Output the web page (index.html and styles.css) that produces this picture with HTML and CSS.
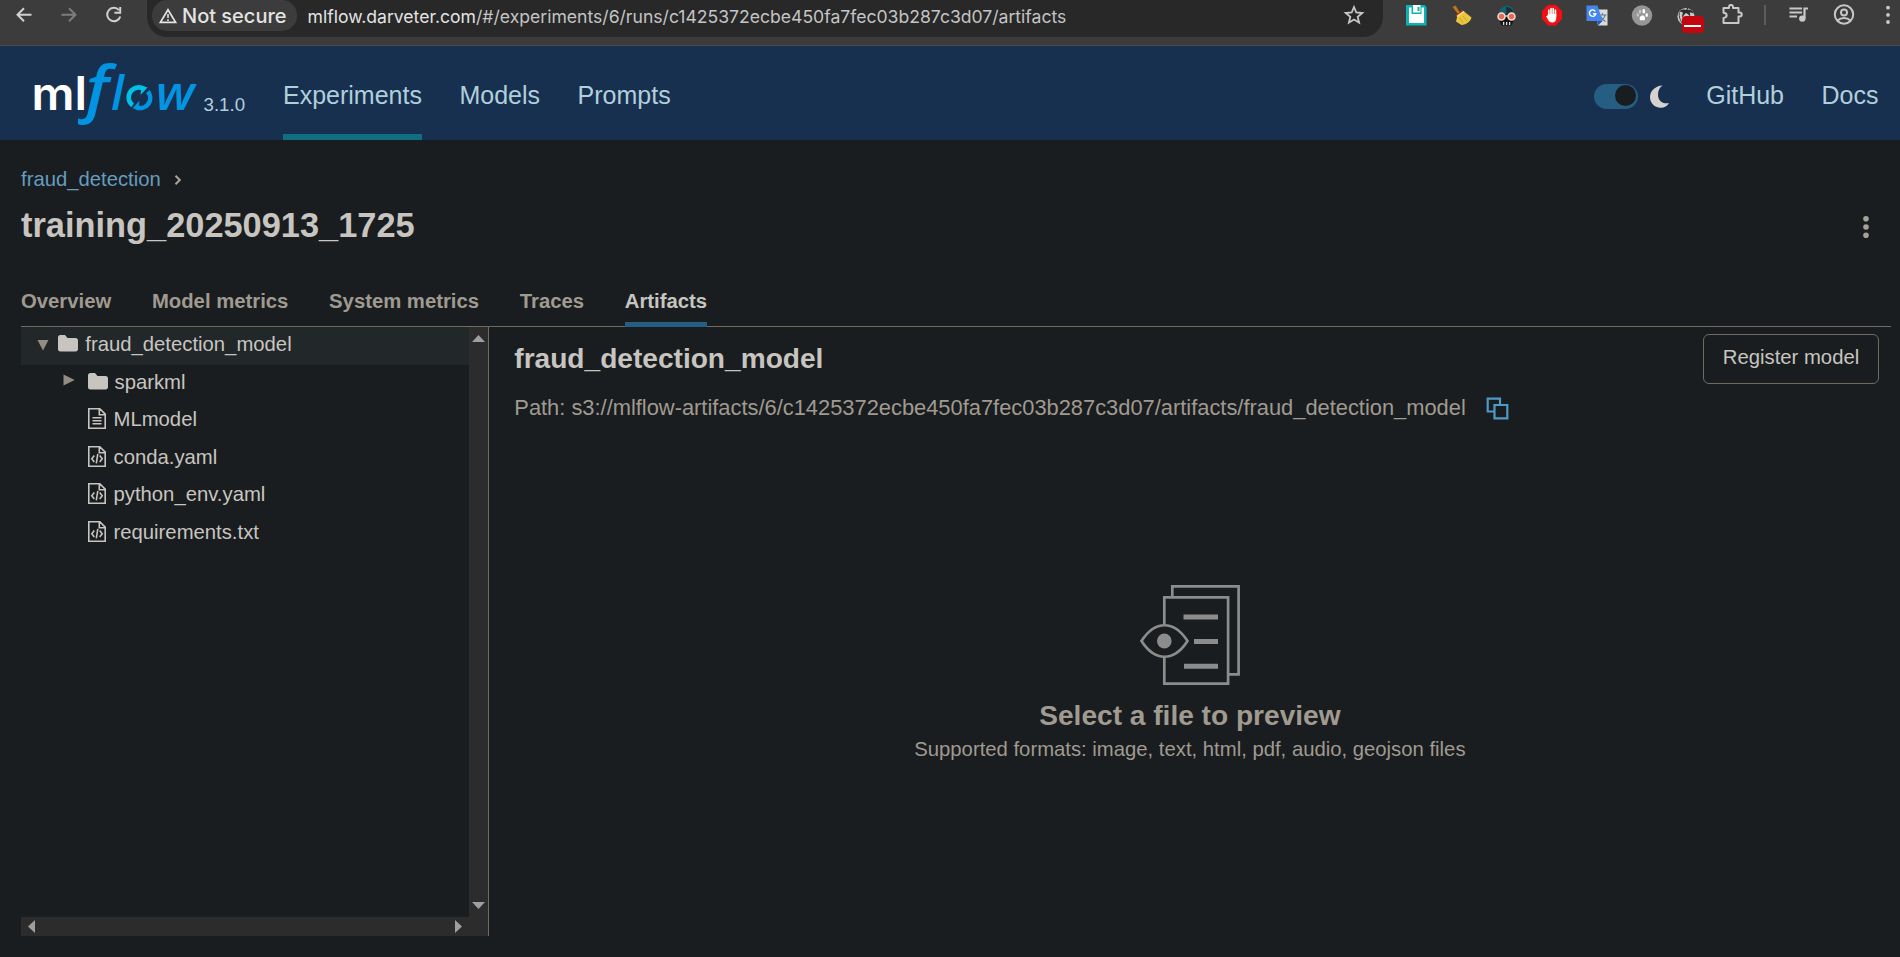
FILE: index.html
```html
<!DOCTYPE html>
<html lang="en">
<head>
<meta charset="utf-8">
<title>training_20250913_1725 - MLflow</title>
<link rel="stylesheet" href="styles.css">
</head>
<body>
<div class="browser-bar">
  <div class="nav-buttons">
    <svg class="ico" viewBox="0 0 22 22"><path d="M18.500 10.700H5M11 4.200L4.500 10.700l6.500 6.500" fill="none" stroke="#d0d0d0" stroke-width="2"/></svg>
    <svg class="ico" viewBox="0 0 22 22"><path d="M3.500 10.700H17M11 4.200l6.500 6.500-6.500 6.500" fill="none" stroke="#7d7d7d" stroke-width="2"/></svg>
    <svg class="ico" viewBox="0 0 22 22"><path d="M16 6.200A6.700 6.700 0 1 0 17.300 12.500" fill="none" stroke="#d0d0d0" stroke-width="2"/><path d="M18.200 3v6.800h-6.800v-2h4.800V3z" fill="#d0d0d0"/></svg>
  </div>
  <div class="address">
    <div class="chip">
      <svg class="warn" viewBox="0 0 18 16"><path d="M9 1.700L16.600 14.400H1.400z" fill="none" stroke="#e3e3e3" stroke-width="1.700"/><path d="M9 6v4M9 11.200v1.700" stroke="#e3e3e3" stroke-width="1.600"/></svg>
      <span class="chip-text">Not secure</span>
    </div>
    <div class="url"><span class="host">mlflow.darveter.com</span>/#/experiments/6/runs/c1425372ecbe450fa7fec03b287c3d07/artifacts</div>
    <svg class="ico star" viewBox="0 0 22 22"><path d="M11 3l2.300 5.500 6 .5-4.600 3.900 1.400 5.800L11 15.600l-5.100 3.100 1.400-5.800L2.700 9l6-.5z" fill="none" stroke="#c8c8c8" stroke-width="1.800"/></svg>
  </div>
  <div class="extensions">
    <svg class="ico" viewBox="0 0 22 22"><path d="M0 1h18.500l2 2v18.500H0z" fill="#0cb3b5"/><path d="M3 3.500h15v15.500H3z" fill="#fff"/><path d="M5.500 1h10v9h-10z" fill="#0cb3b5"/><path d="M7 1h7.500v7.500H7z" fill="#fff"/><path d="M11.500 3h2v4h-2z" fill="#0cb3b5"/></svg>
    <svg class="ico" viewBox="0 0 22 22"><path d="M1.500 3l3-1.500 4.500 7-2 1.500z" fill="#b97a16"/><path d="M5 11l6.500-5L14 9l-6 6z" fill="#c9301c"/><path d="M6.500 11.500L12.500 7l8 6.500c-1 4-5 7-10 7.500L5 17.500z" fill="#eac63f"/><path d="M9 14l3 5M12 12l4 5" stroke="#c39c23" stroke-width=".8"/><path d="M6 12.500l7-5" stroke="#f6e38a" stroke-width="1.500"/></svg>
    <svg class="ico" viewBox="0 0 22 22"><path d="M2.500 12C2.500 5 7 1.500 11 1.500S18.500 5 18.500 12z" fill="#17606c"/><path d="M10 3c5 0 7 3 7.500 7h-7z" fill="#1b3036"/><path d="M3 10.500h15v5l-2.500 6H5.500l-2.500-6z" fill="#151515"/><path d="M7 18h1.300v3H7zM10 18h1.300v3H10zM13 18h1.300v3H13z" fill="#ddd"/><circle cx="5.500" cy="12.500" r="3.500" fill="#e46a58" stroke="#f7dcd5" stroke-width="1.500"/><circle cx="15.500" cy="12.500" r="3.500" fill="#e46a58" stroke="#f7dcd5" stroke-width="1.500"/><path d="M9 12h3" stroke="#f7dcd5" stroke-width="1.300"/></svg>
    <svg class="ico" viewBox="0 0 22 22"><path d="M7 1h8l6 6v8l-6 6.500H7L1 15V7z" fill="#f40d12"/><path d="M7.800 12V6.200M10 11V4.700M12.200 11V4.700M14.400 12V6.200" stroke="#fff" stroke-width="1.700" stroke-linecap="round"/><path d="M6.900 10h8.400v4c0 3-1.800 4.500-4 4.500-2.600 0-3.700-1.500-5-4l-1.200-2.300 1.600-.6z" fill="#fff"/></svg>
    <svg class="ico" viewBox="0 0 22 22"><path d="M8 5.500h13.500v16H12z" fill="#dadada"/><path d="M13 11h7.500M16.500 9v2M19 11c-.5 3-2.500 5-5 6.500M14.500 12c1 2.500 3 4.500 5 5.500" fill="none" stroke="#607d8b" stroke-width="1.200"/><path d="M.5 1.500h11l5 15.500H.5z" fill="#4486ee"/><path d="M11 17h5.500L12 21.500z" fill="#2855b3"/><path d="M9.300 7.300A3.200 3.200 0 1 0 9.800 9.800H7" fill="none" stroke="#fff" stroke-width="1.400"/></svg>
    <svg class="ico" viewBox="0 0 22 22"><circle cx="11" cy="11.500" r="10.200" fill="#969696"/><ellipse cx="6.800" cy="11" rx="1.200" ry="1.800" fill="#c7c7c7"/><ellipse cx="9" cy="7.700" rx="1.300" ry="2" fill="#c7c7c7"/><ellipse cx="12.800" cy="7.300" rx="1.400" ry="2.200" fill="#fff"/><ellipse cx="15.700" cy="11" rx="1.200" ry="1.900" fill="#fff"/><path d="M11.500 11.500c2.200 0 3 2.500 2.400 4-.6 1.300-1.300.7-2.400.7s-2.200.7-2.700-.7c-.5-1.500.5-4 2.700-4z" fill="#fff"/></svg>
    <div class="ext-badged">
      <svg class="ico" viewBox="0 0 22 22"><circle cx="10" cy="12.500" r="8.600" fill="#cbcbcb"/><path d="M10 6c-3-1-6 0-7 2 2-.5 3 0 4 1-1 1.500-1 3-.5 5 1-2.500 2-4 3.500-5 2 1 3.500 2 4 4 .5-2 0-3.500-.5-4.500 2 0 3.500.5 4.500 1.500C17 6 14 5 11.500 6L13 1z" fill="#2c2c2c"/><path d="M3.500 8.500C2.500 12 4 16 6 19" fill="none" stroke="#444" stroke-width="1"/></svg>
      <span class="ext-badge"></span>
    </div>
    <svg class="ico" viewBox="0 0 22 22"><path d="M2.500 4H8V2.900a2 2 0 0 1 4 0V4h5.500v4.500h1.200a2 2 0 0 1 0 4H17.500v6.500h-15v-5c4.200-.3 4.200-5 0-5.200z" fill="none" stroke="#c8c8c8" stroke-width="2" stroke-linejoin="round"/></svg>
  </div>
  <div class="bar-sep"></div>
  <div class="profile-icons">
    <svg class="ico" viewBox="0 0 22 22"><path d="M1.500 4.500H14M1.500 8.500H14M1.500 12.500H9" stroke="#c8c8c8" stroke-width="1.900"/><path d="M16.500 14.500V4.500H20" fill="none" stroke="#c8c8c8" stroke-width="2.200"/><circle cx="14.300" cy="14.600" r="3.200" fill="#c8c8c8"/></svg>
    <svg class="ico" viewBox="0 0 22 22"><circle cx="11" cy="10.500" r="9.200" fill="none" stroke="#c8c8c8" stroke-width="2"/><circle cx="11" cy="8.500" r="3" fill="none" stroke="#c8c8c8" stroke-width="2"/><path d="M4.500 16.500c3.500-3.300 9.500-3.300 13 0" fill="none" stroke="#c8c8c8" stroke-width="2"/></svg>
    <svg class="ico" viewBox="0 0 22 22"><g fill="#c8c8c8"><circle cx="11" cy="3.700" r="1.900"/><circle cx="11" cy="10.900" r="1.900"/><circle cx="11" cy="18" r="1.900"/></g></svg>
  </div>
</div>

<header class="header">
  <svg class="logo" viewBox="0 -11 170 94" role="img">
    <text class="logo-ml" x="0.500" y="53" textLength="55.500" lengthAdjust="spacingAndGlyphs">ml</text>
    <text class="logo-f" transform="translate(54.500 53) scale(1.120 1)" x="0" y="0">f</text>
    <text class="logo-l" x="80" y="53">l</text>
    <path d="M101.600 48.300A10 10 0 0 1 112.500 31.600" fill="none" stroke="#00c2e8" stroke-width="4.600"/>
    <path d="M110.500 28.500L116.500 30.500l-7 7.500z" fill="#00c2e8"/>
    <path d="M116.800 34.500A10 10 0 0 1 105.500 50.300" fill="none" stroke="#0094e2" stroke-width="4.600"/>
    <path d="M107.500 53.300L101.500 51.300l7-7.500z" fill="#0094e2"/>
    <text class="logo-w" x="124.500" y="53" textLength="39" lengthAdjust="spacingAndGlyphs">w</text>
  </svg>
  <span class="version">3.1.0</span>
  <nav class="main-nav">
    <a class="nav-link active">Experiments</a>
    <a class="nav-link">Models</a>
    <a class="nav-link">Prompts</a>
  </nav>
  <div class="header-right">
    <span class="toggle"><span class="knob"></span></span>
    <svg class="moon" viewBox="0 0 19 23"><path d="M12.500 .5C5.500 1 0 5.500 0 12c0 6 4.500 10.700 10.500 10.700 4 0 7-1.700 8.500-4.700-6 1.500-11-2-11-8.500 0-4 1.500-7 4.500-9z" fill="#d6d2cf"/></svg>
    <a class="nav-link">GitHub</a>
    <a class="nav-link">Docs</a>
  </div>
</header>

<main class="page">
  <div class="breadcrumb">
    <a class="crumb">fraud_detection</a>
    <svg class="chev" viewBox="0 0 8 12"><path d="M1.500 1.700L5.800 6 1.500 10.300" fill="none" stroke="#aaa49b" stroke-width="2"/></svg>
  </div>
  <div class="title-row">
    <h1 class="title">training_20250913_1725</h1>
    <svg class="kebab" viewBox="0 0 6 24"><g fill="#a8a198"><circle cx="3" cy="3.800" r="2.800"/><circle cx="3" cy="12" r="2.800"/><circle cx="3" cy="20.200" r="2.800"/></g></svg>
  </div>
  <div class="tabs">
    <span class="tab">Overview</span>
    <span class="tab">Model metrics</span>
    <span class="tab">System metrics</span>
    <span class="tab">Traces</span>
    <span class="tab selected">Artifacts</span>
  </div>
  <div class="split">
    <aside class="tree">
      <div class="tree-top">
        <div class="tree-list">
          <div class="node root"><svg class="caret" viewBox="0 0 12 12"><path d="M.5 1h11L6 11.500z"/></svg><svg class="folder" viewBox="0 0 20 17"><path d="M2.500 0h4.500l2.500 3h8A2.500 2.500 0 0 1 20 5.500v9a2.500 2.500 0 0 1-2.500 2H2.500A2.500 2.500 0 0 1 0 14V2.500A2.500 2.500 0 0 1 2.500 0z"/></svg><span class="label">fraud_detection_model</span></div>
          <div class="node child"><svg class="caret" viewBox="0 0 12 12"><path d="M.500 .500v11L11.700 6z"/></svg><svg class="folder" viewBox="0 0 20 17"><path d="M2.500 0h4.500l2.500 3h8A2.500 2.500 0 0 1 20 5.500v9a2.500 2.500 0 0 1-2.500 2H2.500A2.500 2.500 0 0 1 0 14V2.500A2.500 2.500 0 0 1 2.500 0z"/></svg><span class="label">sparkml</span></div>
          <div class="node leaf"><svg class="file" viewBox="0 0 18 21"><path d="M.8.800h11l5.400 5.400v14H.8zM11.300 1v5.700H17M4.500 9.700h9M4.500 12.700h9M4.500 15.700h9"/></svg><span class="label">MLmodel</span></div>
          <div class="node leaf"><svg class="file" viewBox="0 0 18 21"><path d="M.8.800h11l5.400 5.400v14H.8zM11.300 1v5.700H17M6.300 9.500L3.800 12.700l2.500 3.200M11.700 9.500l2.500 3.200-2.500 3.200M9.800 7.800L8.300 17.300"/></svg><span class="label">conda.yaml</span></div>
          <div class="node leaf"><svg class="file" viewBox="0 0 18 21"><path d="M.8.800h11l5.400 5.400v14H.8zM11.300 1v5.700H17M6.300 9.500L3.800 12.700l2.500 3.200M11.700 9.500l2.500 3.200-2.500 3.200M9.800 7.800L8.300 17.300"/></svg><span class="label">python_env.yaml</span></div>
          <div class="node leaf"><svg class="file" viewBox="0 0 18 21"><path d="M.8.800h11l5.400 5.400v14H.8zM11.300 1v5.700H17M6.300 9.500L3.800 12.700l2.500 3.200M11.700 9.500l2.500 3.200-2.500 3.200M9.800 7.800L8.300 17.300"/></svg><span class="label">requirements.txt</span></div>
        </div>
        <div class="vscroll">
          <svg class="arrow-v" viewBox="0 0 13 7"><path d="M6.500 0L13 7H0z"/></svg>
          <svg class="arrow-v" viewBox="0 0 13 7"><path d="M0 0h13L6.500 7z"/></svg>
        </div>
      </div>
      <div class="hscroll">
        <svg class="arrow-h" viewBox="0 0 7 13"><path d="M7 0v13L0 6.500z"/></svg>
        <svg class="arrow-h" viewBox="0 0 7 13"><path d="M0 0l7 6.500L0 13z"/></svg>
      </div>
    </aside>
    <section class="detail">
      <div class="detail-head">
        <div class="detail-info">
          <h2 class="detail-title">fraud_detection_model</h2>
          <div class="path-row">
            <span class="path">Path: s3://mlflow-artifacts/6/c1425372ecbe450fa7fec03b287c3d07/artifacts/fraud_detection_model</span>
            <svg class="copy" viewBox="0 0 23 23"><path d="M8 14.500H1.700V1.700h12.300V7M8.500 8h12.800v13.300H8.500z" fill="none" stroke="#4e9ac9" stroke-width="2.200"/></svg>
          </div>
        </div>
        <button class="register">Register model</button>
      </div>
      <div class="empty">
        <svg class="preview" viewBox="0 0 100 100"><g fill="none" stroke="#8c8c8c" stroke-width="2.700"><path d="M32.300 12V1.400h66.300v87.900H89M24.300 39V12.300h63.800v86.300H24.300V72"/><path d="M1.500 56C15 35 34 35 47.500 56 34 77 15 77 1.500 56z"/></g><path d="M43.500 29.500h34.500v5H43.500zM54 54h24v5H54zM44 78.700h34v5H44z" fill="#8c8c8c"/><ellipse cx="24.300" cy="56" rx="7.300" ry="7.600" fill="#8c8c8c"/></svg>
        <div class="empty-title">Select a file to preview</div>
        <div class="empty-sub">Supported formats: image, text, html, pdf, audio, geojson files</div>
      </div>
    </section>
  </div>
</main>
</body>
</html>
```
FILE: styles.css
```css
* { box-sizing: border-box; }
body {
  margin: 0;
  height: 957px;
  overflow: hidden;
  background: #191d1f;
  color: #c8c5c0;
  font-family: "Liberation Sans", Arial, sans-serif;
  font-size: 20.3px;
}
svg { display: block; flex: none; }

/* Browser toolbar */
.browser-bar {
  display: flex;
  align-items: flex-start;
  height: 46px;
  background: #3c3c3c;
  border-bottom: 1px solid #4a4a4a;
  font-family: Inter, sans-serif;
}
.ico { width: 22px; height: 22px; }
.nav-buttons { display: flex; gap: 23px; width: 146.500px; padding: 4px 0 0 12.500px; }
.address {
  display: flex;
  align-items: flex-start;
  width: 1236.500px;
  height: 37px;
  padding-left: 5.500px;
  background: #282828;
  border-radius: 0 0 20px 20px;
}
.chip {
  display: flex;
  align-items: center;
  gap: 5.500px;
  width: 145px;
  height: 31px;
  padding-left: 6.500px;
  background: #3c3c3c;
  border-radius: 15px;
}
.warn { width: 18px; height: 16px; }
.chip-text { color: #e3e3e3; font-size: 20px; font-weight: 500; line-height: 32px; white-space: nowrap; }
.url { margin-left: 10.500px; color: #c4c4c4; font-size: 17.580px; line-height: 34px; white-space: nowrap; }
.host { color: #e3e3e3; }
.star { margin: 4px 18.500px 0 auto; }
.extensions { display: flex; gap: 23px; padding: 4px 0 0 22.500px; }
.ext-badged { position: relative; }
.ext-badge {
  position: absolute;
  left: 6px;
  top: 12px;
  width: 22px;
  height: 17px;
  border-radius: 4px;
  background: linear-gradient(#fff, #fff) center 9px / 17px 2px no-repeat #c5050f;
}
.bar-sep { width: 2px; height: 20px; margin: 5px 22px 0 21.500px; background: #5d5d5d; }
.profile-icons { display: flex; gap: 22.500px; padding-top: 4px; }

/* Application header */
.header {
  display: flex;
  height: 94px;
  padding: 0 21.500px 0 31px;
  background: #18304f;
  color: #b0cfdc;
}
.logo { width: 170px; height: 94px; overflow: visible; }
.logo-ml { font: 600 46px Inter, sans-serif; fill: #fff; }
.logo-f { font: italic 600 61px "Open Sans", sans-serif; fill: #0094e2; }
.logo-l, .logo-w { font: italic 600 47px "Open Sans", sans-serif; fill: #0094e2; }
.version { width: 80px; padding-left: 2.500px; font-size: 18.700px; line-height: 118px; }
.main-nav { display: flex; gap: 37.500px; margin-left: 2px; }
.nav-link { font-size: 25px; line-height: 98.500px; height: 94px; white-space: nowrap; }
.nav-link.active { border-bottom: 6px solid #116e80; }
.header-right { display: flex; align-items: flex-start; margin-left: auto; }
.header-right .nav-link { margin-left: 37.500px; }
.toggle {
  display: flex;
  justify-content: flex-end;
  width: 44px;
  height: 25px;
  margin-top: 38px;
  padding: 1px 2px;
  border-radius: 13px;
  background: #265d83;
}
.knob { width: 21px; height: 21px; border-radius: 50%; background: #191d1f; }
.moon { width: 19px; height: 23px; margin: 39px 0 0 12px; }

/* Run page */
.page { padding: 24px 9px 0 21px; }
.breadcrumb { display: flex; align-items: center; height: 31px; }
.crumb { color: #659cc0; line-height: 31px; }
.chev { width: 8px; height: 12px; margin: 1px 0 0 13px; }
.title-row { display: flex; justify-content: space-between; height: 60px; }
.title { margin: 0; font-size: 34.380px; line-height: 60px; }
.kebab { width: 6px; height: 24px; margin: 20px 22px 0 0; }
.tabs {
  display: flex;
  gap: 40.750px;
  height: 72px;
  padding-top: 21px;
  border-bottom: 1px solid #716a61;
}
.tab { height: 51px; font-weight: 700; line-height: 50px; color: #a09a91; white-space: nowrap; }
.tab.selected { color: #c8c5c0; border-bottom: 5px solid #265d83; }

.split { display: flex; height: 609px; }
.tree { width: 468px; border-right: 1px solid #716a61; }
.tree-top { display: flex; height: 590px; }
.tree-list { width: 448px; }
.node { display: flex; height: 37.500px; line-height: 35px; white-space: nowrap; }
.root { background: #22272a; padding-left: 16px; }
.child { padding-left: 41.500px; }
.leaf { padding-left: 67px; }
.caret { width: 12px; height: 12px; margin: 12px 9px 0 0; fill: #948c82; }
.child .caret { margin: 9.500px 13.500px 0 0; }
.folder { width: 20px; height: 17px; margin: 8px 7.300px 0 0; fill: #c8c5c0; }
.child .folder { margin-right: 6.500px; }
.file { width: 18px; height: 21px; margin: 6px 7.500px 0 0; fill: none; stroke: #c8c5c0; stroke-width: 1.600; }
.vscroll {
  display: flex;
  flex-direction: column;
  align-items: center;
  justify-content: space-between;
  width: 19px;
  padding: 8px 0;
  background: #2c2c2c;
}
.arrow-v { width: 13px; height: 7px; fill: #9f9f9f; }
.hscroll {
  display: flex;
  align-items: center;
  justify-content: space-between;
  height: 19px;
  padding: 0 26px 0 7px;
  background: #2c2c2c;
}
.arrow-h { width: 7px; height: 13px; fill: #9f9f9f; }

.detail { flex: 1; padding: 7px 12px 0 25.300px; }
.detail-head { display: flex; justify-content: space-between; align-items: flex-start; }
.detail-title { margin: 0; font-size: 28.100px; line-height: 49px; }
.path-row { display: flex; align-items: center; gap: 20px; height: 49px; }
.path { color: #a09a91; font-size: 21.870px; white-space: nowrap; }
.copy { width: 23px; height: 23px; margin-top: 1px; }
.register {
  width: 176px;
  height: 50px;
  padding: 0 0 4px;
  border: 1px solid #716a61;
  border-radius: 6px;
  background: transparent;
  color: #c8c5c0;
  font: 20.300px "Liberation Sans", Arial, sans-serif;
}
.empty { display: flex; flex-direction: column; align-items: center; padding: 153px 13.500px 0 0; color: #a09a91; }
.preview { width: 100px; height: 100px; }
.empty-title { margin-top: 13px; font-size: 28.100px; font-weight: 700; line-height: 36px; }
.empty-sub { line-height: 31px; }
```
